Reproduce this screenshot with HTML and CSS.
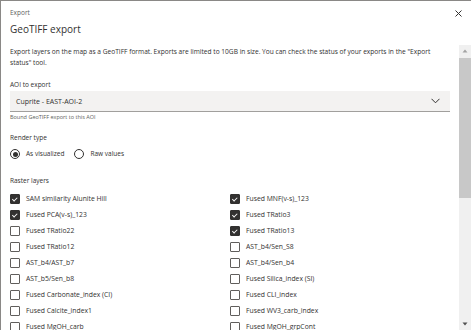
FILE: index.html
```html
<!DOCTYPE html>
<html lang="en">
<head>
    <meta charset="UTF-8">
    <title>GeoTIFF export</title>
    <link rel="stylesheet" href="styles.css">
</head>
<body>
    <div class="dialog">
        <div class="dialog-header">
            <div class="eyebrow">Export</div>
            <h1>GeoTIFF export</h1>
            <button class="close-btn" aria-label="Close">
                <svg width="7" height="7" viewBox="0 0 7 7"><path d="M0.5 0.5L6.5 6.5M6.5 0.5L0.5 6.5" stroke="#323130" stroke-width="1"/></svg>
            </button>
        </div>

        <div class="dialog-body">
            <div class="scroll-content">
                <p class="intro">Export layers on the map as a GeoTIFF format. Exports are limited to 10GB in size. You can check the status of your exports in the "Export status" tool.</p>

                <div class="field aoi">
                    <div class="field-label">AOI to export</div>
                    <div class="select">
                        <span>Cuprite - EAST-AOI-2</span>
                        <svg width="9" height="6" viewBox="0 0 9 6"><path d="M0.5 0.8L4.5 4.8L8.5 0.8" fill="none" stroke="#323130" stroke-width="1"/></svg>
                    </div>
                    <div class="field-hint">Bound GeoTIFF export to this AOI</div>
                </div>

                <div class="field render">
                    <div class="field-label">Render type</div>
                    <div class="radios">
                        <label class="radio checked"><span class="dot"></span>As visualized</label>
                        <label class="radio"><span class="dot"></span>Raw values</label>
                    </div>
                </div>

                <div class="field raster">
                    <div class="field-label">Raster layers</div>
                    <div class="layers">
                        <label class="check on"><span class="box"></span>SAM similarity Alunite Hill</label>
                        <label class="check on"><span class="box"></span>Fused MNF(v-s)_123</label>
                        <label class="check on"><span class="box"></span>Fused PCA(v-s)_123</label>
                        <label class="check on"><span class="box"></span>Fused TRatio3</label>
                        <label class="check"><span class="box"></span>Fused TRatio22</label>
                        <label class="check on"><span class="box"></span>Fused TRatio13</label>
                        <label class="check"><span class="box"></span>Fused TRatio12</label>
                        <label class="check"><span class="box"></span>AST_b4/Sen_S8</label>
                        <label class="check"><span class="box"></span>AST_b4/AST_b7</label>
                        <label class="check"><span class="box"></span>AST_b4/Sen_b4</label>
                        <label class="check"><span class="box"></span>AST_b5/Sen_b8</label>
                        <label class="check"><span class="box"></span>Fused Silica_index (SI)</label>
                        <label class="check"><span class="box"></span>Fused Carbonate_index (CI)</label>
                        <label class="check"><span class="box"></span>Fused CLI_index</label>
                        <label class="check"><span class="box"></span>Fused Calcite_index1</label>
                        <label class="check"><span class="box"></span>Fused WV3_carb_index</label>
                        <label class="check"><span class="box"></span>Fused MgOH_carb</label>
                        <label class="check"><span class="box"></span>Fused MgOH_grpCont</label>
                    </div>
                </div>
            </div>

            <!-- scrollbar drawn by hand, the screenshot browser hides native ones -->
            <div class="scrollbar">
                <div class="sb-btn up"><svg width="6" height="4" viewBox="0 0 6 4"><path d="M3 0.5L5.5 3.5H0.5Z" fill="#a3a3a3"/></svg></div>
                <div class="sb-track"><div class="sb-thumb"></div></div>
                <div class="sb-btn down"><svg width="6" height="4" viewBox="0 0 6 4"><path d="M0.5 0.5H5.5L3 3.5Z" fill="#505050"/></svg></div>
            </div>
        </div>
    </div>
</body>
</html>
```

FILE: styles.css
```css
* {
    margin: 0;
    padding: 0;
    box-sizing: border-box;
}

body {
    font-family: 'Open Sans', 'Liberation Sans', sans-serif;
    color: #323130;
    background: #fff;
    overflow: hidden;
}

.dialog {
    width: 471px;
    height: 330px;
    display: flex;
    flex-direction: column;
    border-top: 1px solid #8a8886;
    border-left: 1px solid #8a8886;
    background: #fff;
}

.dialog-header {
    position: relative;
    padding: 8px 10px 0 9px;
    height: 44px;
    flex-shrink: 0;
}

.eyebrow {
    font-size: 6.5px;
    color: #605e5c;
    line-height: 8px;
}

h1 {
    font-size: 10px;
    font-weight: 400;
    line-height: 14px;
    margin-top: 5px;
}

.close-btn {
    position: absolute;
    top: 9px;
    right: 9px;
    border: none;
    background: none;
    width: 7px;
    height: 7px;
    display: flex;
}

.dialog-body {
    flex: 1;
    min-height: 0;
    display: flex;
}

.scroll-content {
    flex: 1;
    overflow: hidden;
    padding: 0 9px 0 9px;
}

.scrollbar {
    width: 12px;
    flex-shrink: 0;
    background: #f0f0f0;
    display: flex;
    flex-direction: column;
}

.sb-btn {
    height: 12px;
    display: flex;
    align-items: center;
    justify-content: center;
}

.sb-track {
    flex: 1;
}

.sb-thumb {
    margin-top: 1px;
    height: 140px;
    background: #c8c8c8;
}

.intro {
    font-size: 6.6px;
    line-height: 11px;
    margin-top: 1px;
}

.field {
    margin-top: 12px;
}

.field.render {
    margin-top: 11px;
}

.field.raster {
    margin-top: 16px;
}

.field-label {
    font-size: 6.5px;
    line-height: 10px;
    color: #323130;
}

.select {
    margin-top: 1px;
    height: 21px;
    background: #f3f2f1;
    border-bottom: 1px solid #a19f9d;
    display: flex;
    align-items: center;
    justify-content: space-between;
    padding: 0 10px 0 6px;
    font-size: 7px;
}

.field-hint {
    font-size: 5.5px;
    line-height: 10px;
    color: #605e5c;
}

.radios {
    display: flex;
    gap: 10px;
    margin-top: 5px;
}

.radio {
    display: flex;
    align-items: center;
    gap: 6px;
    font-size: 6.5px;
    line-height: 12px;
}

.radio .dot {
    width: 10px;
    height: 10px;
    border: 1px solid #323130;
    border-radius: 50%;
    display: flex;
    align-items: center;
    justify-content: center;
}

.radio.checked .dot::after {
    content: "";
    width: 5px;
    height: 5px;
    border-radius: 50%;
    background: #323130;
}

.layers {
    display: grid;
    grid-template-columns: 1fr 1fr;
    margin-top: 7px;
    row-gap: 4px;
}

.check {
    display: flex;
    align-items: center;
    gap: 6px;
    font-size: 6.8px;
    line-height: 12px;
}

.check .box {
    width: 10px;
    height: 10px;
    border: 1px solid #605e5c;
    border-radius: 1px;
    display: flex;
    align-items: center;
    justify-content: center;
}

.check.on .box {
    background: #323130;
    border-color: #323130;
}

.check.on .box::after {
    content: "";
    width: 4px;
    height: 2px;
    border-left: 1px solid #fff;
    border-bottom: 1px solid #fff;
    transform: rotate(-45deg) translate(0, -1px);
}
```
